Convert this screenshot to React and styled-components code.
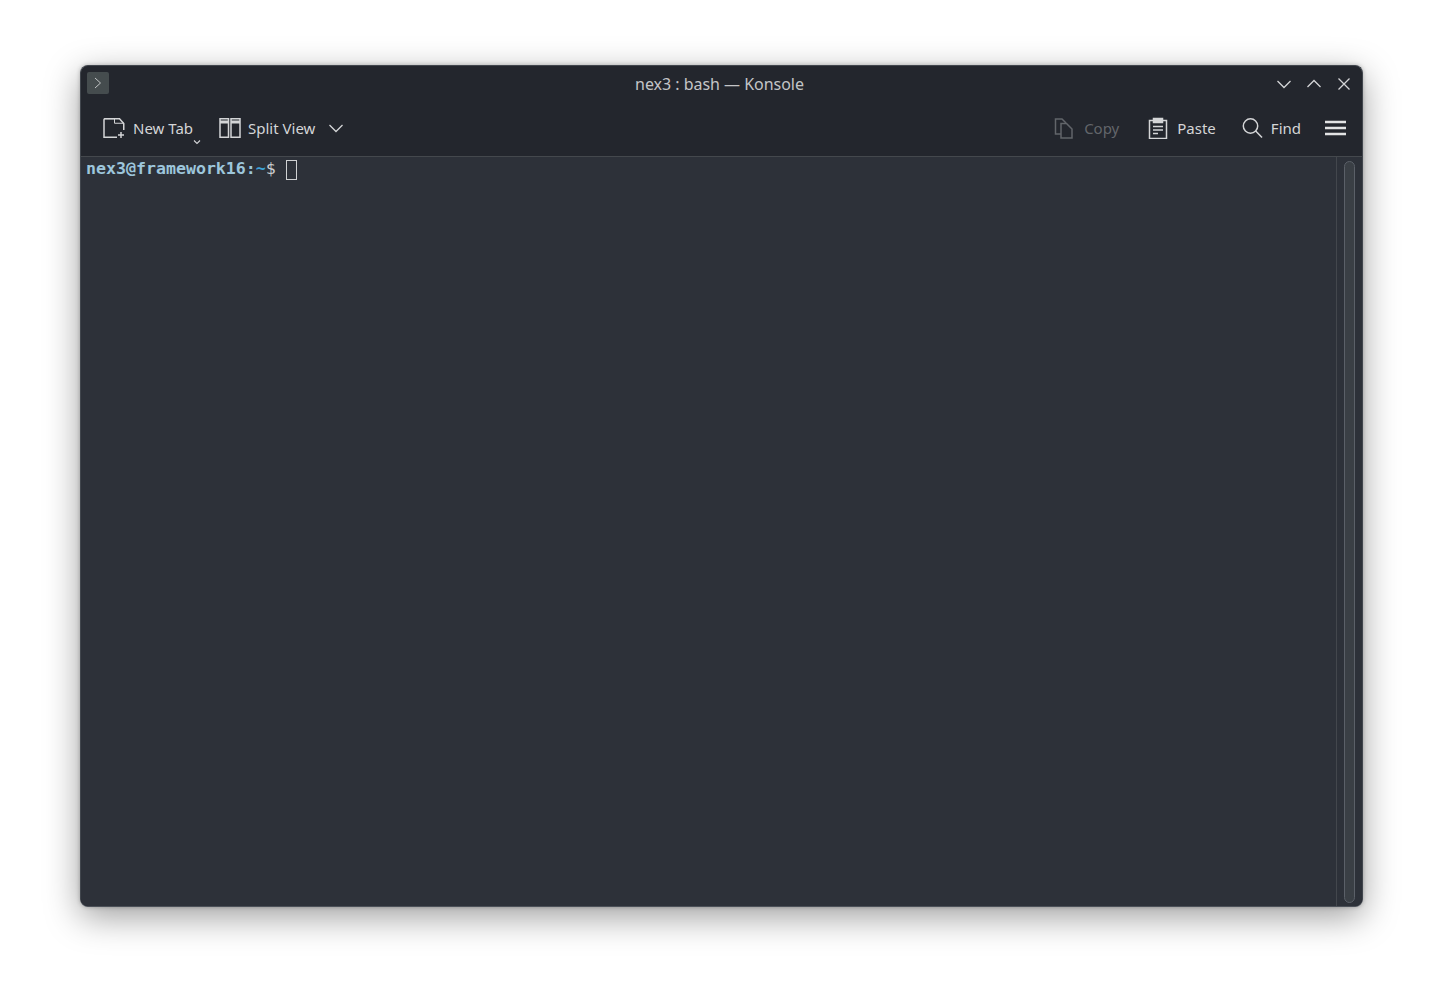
import React from 'react';
import styled, { createGlobalStyle } from 'styled-components';

const Global = createGlobalStyle`
  html, body { margin: 0; padding: 0; background: #fff; overflow: hidden; }
  * { box-sizing: border-box; }
`;
const Page = styled.div`
  width: 1443px; height: 1003px; padding: 65px 80px 96px;
  font-family: "Noto Sans", sans-serif;
`;
const Win = styled.div`
  width: 1283px; height: 842px; display: flex; flex-direction: column;
  background: #23262d; border-radius: 8px; overflow: hidden;
  border: 1px solid #41464d; border-bottom-color: #4c5159;
`;
const Shadow = styled.div`
  border-radius: 8px;
  box-shadow: 0 10px 35px rgba(0,0,0,.38), 0 0 4px rgba(0,0,0,.25);
`;
const TitleBar = styled.div`
  height: 36px; flex: none; display: grid; grid-template-columns: 1fr auto 1fr; align-items: center;
  padding: 0 10px 0 6px;
`;
const AppIcon = styled.div`
  width: 22px; height: 22px; border-radius: 2px; background: #454c4e;
  display: flex; align-items: center; justify-content: center; margin-top: -2px;
`;
const Title = styled.div`
  color: #c4c5c7; font-size: 16px; line-height: 20px; letter-spacing: -.03px;
`;
const WinControls = styled.div`
  justify-self: end; display: flex; gap: 14px; align-items: center;
`;
const Toolbar = styled.div`
  height: 55px; flex: none; display: flex; align-items: center; padding: 0 16px 2px 22px;
  border-bottom: 1px solid #44484d;
`;
const ToolBtn = styled.div`
  position: relative; display: flex; align-items: center; gap: ${p => p.$gap ?? 8}px;
  color: ${p => p.$off ? '#62656a' : '#d4d5d7'}; font-size: 15px; line-height: 20px;
  margin-left: ${p => p.$ml ?? 0}px;
`;
const Spacer = styled.div`flex: 1;`;
const SmallCaret = styled.svg`position: absolute; right: -8px; bottom: -6px;`;
const Body = styled.div`flex: 1; display: flex; background: #2d3139; min-height: 0;`;
const Term = styled.div`
  flex: 1; padding: 1px 5px; font-family: "DejaVu Sans Mono", monospace; font-size: 16.6px;
  line-height: 22px; white-space: pre; color: #c9ccd0; display: flex; align-items: flex-start;
`;
const Prompt = styled.span`font-weight: 700; color: ${p => p.$c};`;
const Cursor = styled.span`
  width: 11px; height: 20px; border: 1.5px solid #cfd1d3; margin: 2px 0 0 10px;
`;
const ScrollTrack = styled.div`
  width: 26px; flex: none; border-left: 1px solid #43474d; padding: 4px 7px 3px 7px; display: flex;
`;
const Thumb = styled.div`
  flex: 1; border: 1px solid #5b6068; background: #3a3f45; border-radius: 6px;
`;

const Ic = ({ children, w = 24, h = 24, c = '#d4d5d7', sw = 1.5 }) => (
  <svg width={w} height={h} viewBox={`0 0 ${w} ${h}`} fill="none" stroke={c} strokeWidth={sw}>{children}</svg>
);

export default function App() {
  return (
    <Page>
      <Global />
      <Shadow>
        <Win>
          <TitleBar>
            <AppIcon>
              <svg width="10" height="12" viewBox="0 0 10 12" fill="none" stroke="#c2c5c6" strokeWidth="1"><path d="M2 1l5.5 5L2 11" /></svg>
            </AppIcon>
            <Title>nex3 : bash — Konsole</Title>
            <WinControls>
              <svg width="16" height="16" viewBox="0 0 16 16" fill="none" stroke="#d4d5d7" strokeWidth="1.3"><path d="M1.5 5l6.5 6.5L14.5 5" /></svg>
              <svg width="16" height="16" viewBox="0 0 16 16" fill="none" stroke="#d4d5d7" strokeWidth="1.3"><path d="M1.5 11L8 4.5 14.5 11" /></svg>
              <svg width="16" height="16" viewBox="0 0 16 16" fill="none" stroke="#d4d5d7" strokeWidth="1.3"><path d="M2.5 2.5l11 11M13.5 2.5l-11 11" /></svg>
            </WinControls>
          </TitleBar>
          <Toolbar>
            <ToolBtn>
              <Ic w={22} h={22}>
                <path d="M12 1.75H2a1 1 0 0 0-1 1v17.5h13M20.75 13V6.5L16.5 1.75H12" />
                <path d="M1 1.75h10.5v4.5H21" strokeWidth="1" />
                <path d="M18 15v6M15 18h6" />
              </Ic>
              New Tab
              <SmallCaret width="8" height="6" viewBox="0 0 8 6" fill="none" stroke="#d4d5d7" strokeWidth="1.1"><path d="M1 1.5l3 3 3-3" /></SmallCaret>
            </ToolBtn>
            <ToolBtn $ml={26} $gap={7}>
              <Ic w={22} h={22}>
                <rect x="1" y="1.75" width="8.5" height="18.5" />
                <rect x="12" y="1.75" width="9" height="18.5" />
                <path d="M1 5h8.5M12 5h9" strokeWidth="3" />
              </Ic>
              Split View
            </ToolBtn>
            <ToolBtn $ml={13}>
              <svg width="16" height="16" viewBox="0 0 16 16" fill="none" stroke="#d4d5d7" strokeWidth="1.3"><path d="M1.5 5l6.5 6.5L14.5 5" /></svg>
            </ToolBtn>
            <Spacer />
            <ToolBtn $off $gap={9}>
              <Ic w={21} h={22} c="#62656a">
                <path d="M7 17H1.5V2h6.5l4 4" />
                <path d="M7 6.5h5.5l5.5 5.5v9H7z" />
              </Ic>
              Copy
            </ToolBtn>
            <ToolBtn $ml={29} $gap={9}>
              <Ic w={20} h={22}>
                <path d="M5 3.5H1.5v18h17v-18H15" />
                <path d="M5.5 1.5h9v4h-9z" fill="#d4d5d7" />
                <path d="M5 9.5h10M5 13h10M5 16.5h5" />
              </Ic>
              Paste
            </ToolBtn>
            <ToolBtn $ml={26} $gap={8}>
              <Ic w={21} h={22}>
                <circle cx="8.5" cy="9" r="7.2" />
                <path d="M13.7 14l6.3 6.5" />
              </Ic>
              Find
            </ToolBtn>
            <ToolBtn $ml={24}>
              <svg width="21" height="18" viewBox="0 0 21 18" fill="none" stroke="#e2e3e4" strokeWidth="2.4"><path d="M0 3h21M0 9h21M0 15h21" /></svg>
            </ToolBtn>
          </Toolbar>
          <Body>
            <Term>
              <Prompt $c="#9dc6dc">nex3@framework16:</Prompt>
              <Prompt $c="#3ea3d8">~</Prompt>
              <span>$</span>
              <Cursor />
            </Term>
            <ScrollTrack><Thumb /></ScrollTrack>
          </Body>
        </Win>
      </Shadow>
    </Page>
  );
}
